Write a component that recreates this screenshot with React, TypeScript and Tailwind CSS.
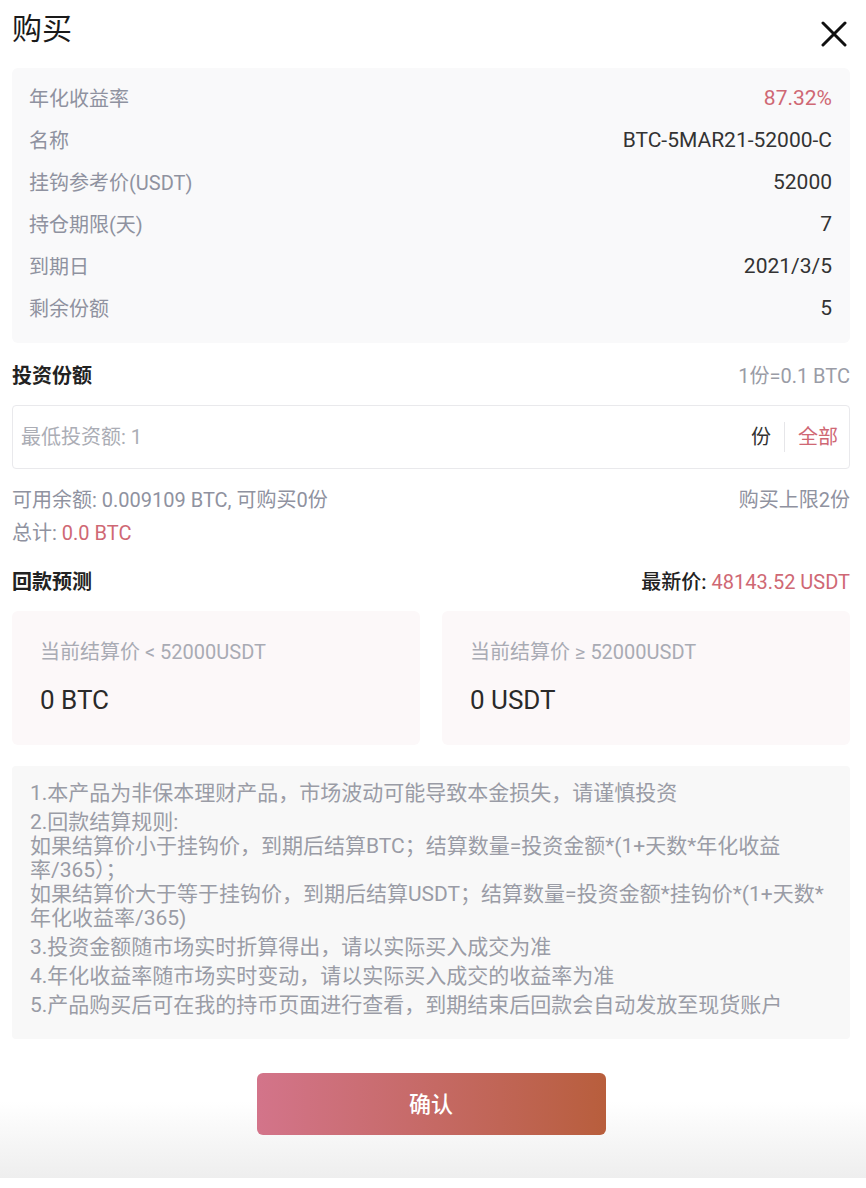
const infoRows: { label: string; value: string; red?: boolean }[] = [
  { label: "年化收益率", value: "87.32%", red: true },
  { label: "名称", value: "BTC-5MAR21-52000-C" },
  { label: "挂钩参考价(USDT)", value: "52000" },
  { label: "持仓期限(天)", value: "7" },
  { label: "到期日", value: "2021/3/5" },
  { label: "剩余份额", value: "5" },
];

function CloseIcon() {
  return (
    <svg width="26" height="26" viewBox="0 0 26 26" fill="none">
      <path d="M2 2L24 24M24 2L2 24" stroke="#111" strokeWidth="3" strokeLinecap="round" />
    </svg>
  );
}

export default function App() {
  return (
    <div className="min-h-[1188px] bg-white font-['Roboto','Noto_Sans_CJK_SC',sans-serif] text-[#333]">
      <div className="pl-3 pr-4">
        <div className="flex h-[57px] items-center justify-between">
          <h1 className="text-[30px] leading-[40px] font-normal text-[#1a1a1a]">购买</h1>
          <div className="mt-[10px] mr-[3px]">
            <CloseIcon />
          </div>
        </div>

        <div className="mt-[11px] rounded-md bg-[#f9f9fa] pt-[10px] pb-[13px] pl-[17px] pr-[18px]">
          {infoRows.map((r) => (
            <div key={r.label} className="flex h-[42px] items-center justify-between">
              <span className="text-[20px] text-[#8f92a0]">{r.label}</span>
              <span className={"text-[21px] " + (r.red ? "text-[#cf6874]" : "text-[#333]")}>{r.value}</span>
            </div>
          ))}
        </div>

        <div className="mt-[19px] flex h-[28px] items-center justify-between text-[20px]">
          <span className="font-bold text-[#222]">投资份额</span>
          <span className="text-[#9a9ca6]">1份=0.1 BTC</span>
        </div>

        <div className="mt-[15px] flex h-[64px] items-center rounded-sm border border-[#e9e9ec] bg-white pl-[8px] pr-[11px] text-[20px]">
          <span className="flex-1 text-[#abadb5]">最低投资额: 1</span>
          <span className="text-[#333]">份</span>
          <span className="mx-[13px] h-[30px] w-px bg-[#e6e6e9]" />
          <span className="text-[#cf6874]">全部</span>
        </div>

        <div className="mt-[17px] flex h-[28px] items-center justify-between text-[20px] text-[#8f92a0]">
          <span>可用余额: 0.009109 BTC, 可购买0份</span>
          <span>购买上限2份</span>
        </div>
        <div className="mt-[5px] flex h-[28px] items-center text-[20px] text-[#8f92a0]">
          <span>总计: </span>
          <span className="ml-[5px] text-[#cf6874]">0.0 BTC</span>
        </div>

        <div className="mt-[21px] flex h-[28px] items-center justify-between text-[20px]">
          <span className="font-bold text-[#222]">回款预测</span>
          <span>
            <span className="font-medium text-[#222]">最新价: </span>
            <span className="text-[#cf6874]">48143.52 USDT</span>
          </span>
        </div>

        <div className="mt-[15px] grid grid-cols-2 gap-[22px]">
          {[
            { label: "当前结算价 < 52000USDT", value: "0 BTC" },
            { label: "当前结算价 ≥ 52000USDT", value: "0 USDT" },
          ].map((c) => (
            <div key={c.label} className="h-[134px] rounded-md bg-[#fcf8f9] pt-[27px] pl-[28px]">
              <div className="h-[28px] text-[20px] leading-[28px] text-[#a9abb4]">{c.label}</div>
              <div className="mt-[18px] h-[32px] text-[26px] leading-[32px] text-[#2a2a2a]">{c.value}</div>
            </div>
          ))}
        </div>

        <div className="mt-[21px] flex flex-col gap-[5px] rounded-sm bg-[#f8f8f8] pt-[15px] pb-[22px] pl-[18px] pr-[10px] text-[21px] leading-[24px] text-[#9a9ca6] whitespace-nowrap">
          <p>1.本产品为非保本理财产品，市场波动可能导致本金损失，请谨慎投资</p>
          <p>
            2.回款结算规则:
            <br />
            如果结算价小于挂钩价，到期后结算BTC；结算数量=投资金额*(1+天数*年化收益
            <br />
            率/365）；
            <br />
            如果结算价大于等于挂钩价，到期后结算USDT；结算数量=投资金额*挂钩价*(1+天数*
            <br />
            年化收益率/365)
          </p>
          <p>3.投资金额随市场实时折算得出，请以实际买入成交为准</p>
          <p>4.年化收益率随市场实时变动，请以实际买入成交的收益率为准</p>
          <p>5.产品购买后可在我的持币页面进行查看，到期结束后回款会自动发放至现货账户</p>
        </div>
      </div>

      <div className="flex h-[139px] justify-center bg-linear-to-b from-white from-45% to-[#eeeeee] pt-[34px] pr-[4px]">
        <button className="h-[62px] w-[349px] rounded-md bg-linear-to-r from-[#d3748a] to-[#b85e3c] text-[22px] font-medium text-white">
          确认
        </button>
      </div>
    </div>
  );
}
